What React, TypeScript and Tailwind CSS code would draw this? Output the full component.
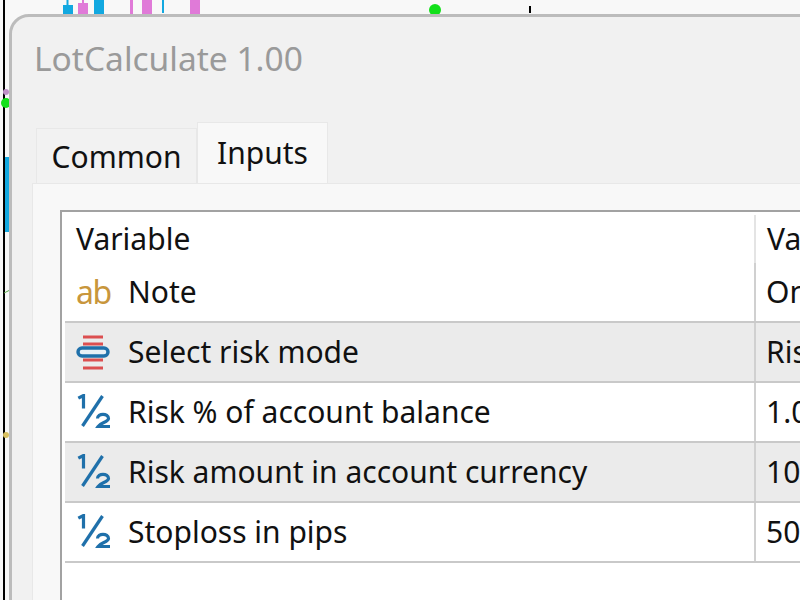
const font = "font-['Noto_Sans','Open_Sans',sans-serif]"

function HalfIcon() {
    return (
        <svg width="36" height="36" viewBox="0 0 36 36" fill="none" stroke="#1f70aa" strokeWidth="3.2">
            <path d="M2.3 4.2 L7.5 1.5 V14.5" />
            <path d="M26.5 2 L6.5 32" />
            <path d="M21.5 24.5 c0-5.5 11-5.5 11 0 c0 3.5-8 4-10.5 8 h12" />
        </svg>
    )
}

function ModeIcon() {
    return (
        <svg width="34" height="36" viewBox="0 0 34 36" fill="none">
            <path d="M7 3 H27 M7 10 H27 M7 26 H27 M7 34 H27" stroke="#dc4f50" strokeWidth="3" />
            <rect x="2" y="14" width="30" height="8" rx="4" fill="#e8f0f6" stroke="#1f70aa" strokeWidth="3.4" />
        </svg>
    )
}

function TextIcon() {
    return <span className="text-[32px] leading-none text-[#c8963c] tracking-[-1.5px]">ab</span>
}

const rows = [
    { icon: <TextIcon />, label: "Note", value: "One", shaded: false },
    { icon: <ModeIcon />, label: "Select risk mode", value: "Risk", shaded: true },
    { icon: <HalfIcon />, label: "Risk % of account balance", value: "1.00", shaded: false },
    { icon: <HalfIcon />, label: "Risk amount in account currency", value: "100", shaded: true },
    { icon: <HalfIcon />, label: "Stoploss in pips", value: "50", shaded: false }
]

function ChartBehind() {
    return (
        <svg className="absolute left-0 top-0" width="800" height="600" viewBox="0 0 800 600">
            <rect x="3" y="0" width="2" height="600" fill="#000" />
            <path d="M67.5 0 V6" stroke="#12a8e0" strokeWidth="2" />
            <rect x="63" y="5" width="10" height="11" fill="#12a8e0" />
            <path d="M83 0 V4" stroke="#e07ad8" strokeWidth="2" />
            <rect x="78" y="3" width="10" height="13" fill="#e07ad8" />
            <rect x="94" y="0" width="10" height="16" fill="#12a8e0" />
            <rect x="130" y="0" width="3" height="16" fill="#e07ad8" />
            <rect x="142" y="0" width="10" height="16" fill="#e07ad8" />
            <rect x="162" y="0" width="2" height="13" fill="#12a8e0" />
            <rect x="190" y="0" width="10" height="16" fill="#e07ad8" />
            <circle cx="435" cy="10" r="6" fill="#12e01a" />
            <rect x="529" y="6" width="2" height="7" fill="#000" />
            <circle cx="6" cy="92" r="3" fill="#c090c8" />
            <circle cx="6" cy="103" r="5" fill="#12e01a" />
            <rect x="5" y="157" width="5" height="75" fill="#12a8e0" />
            <path d="M4 293 L12 289" stroke="#5aa84a" strokeWidth="1" />
            <circle cx="6" cy="435" r="3" fill="#d8c060" />
        </svg>
    )
}

export default function App() {
    return (
        <div className={`relative h-[600px] w-[800px] overflow-hidden bg-[#f8f8f8] ${font}`}>
            <ChartBehind />
            <div className="relative ml-[9px] mt-[14px] flex h-[620px] w-[830px] flex-col rounded-tl-[20px] border-[3px] border-[#bcbcbc] bg-[#f1f1f1]">
                <div className="pl-[22px] pt-[19px] text-[33.5px] leading-[44px] text-[#9a9a9a]">
                    LotCalculate 1.00
                </div>
                <div className="flex items-end pl-[24px] pt-[42px] text-[30px] text-[#111]">
                    <div className="flex h-[55px] w-[161px] items-center justify-center border border-b-0 border-[#e8e8e8] bg-[#f2f2f2]">
                        Common
                    </div>
                    <div className="flex h-[61px] w-[131px] items-center justify-center border border-b-0 border-[#e8e8e8] bg-[#f8f8f8] pb-[2px]">
                        Inputs
                    </div>
                </div>
                <div className="ml-[20px] flex-1 border-l border-t border-[#e8e8e8] bg-[#f8f8f8] pl-[28px] pt-[26px]">
                    <div className="-ml-[1px] h-full border-l-2 border-t-2 border-[#a2a2a2] bg-white pl-[3px] text-[30px] leading-none text-[#111]">
                        <div className="grid h-[51px] grid-cols-[689px_1fr] pt-[3px]">
                            <div className="flex items-center pl-[11px]">Variable</div>
                            <div className="flex items-center border-l-2 border-[#e4e4e4] pl-[11px]">Value</div>
                        </div>
                        {rows.map(row => (
                            <div
                                key={row.label}
                                className={`grid h-[60px] grid-cols-[689px_1fr] border-b-2 border-[#c9c9c9] ${row.shaded ? "bg-[#ebebeb]" : "bg-white"}`}
                            >
                                <div className="flex items-center pl-[11px]">
                                    <div className="flex w-[52px] items-center">{row.icon}</div>
                                    <span>{row.label}</span>
                                </div>
                                <div className="flex items-center border-l-2 border-[#d0d0d0] pl-[10px]">{row.value}</div>
                            </div>
                        ))}
                    </div>
                </div>
            </div>
        </div>
    )
}
